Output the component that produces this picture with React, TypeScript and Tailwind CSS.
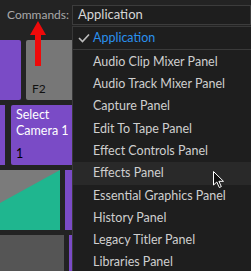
import React from "react";

const items = [
  "Audio Clip Mixer Panel",
  "Audio Track Mixer Panel",
  "Capture Panel",
  "Edit To Tape Panel",
  "Effect Controls Panel",
  "Effects Panel",
  "Essential Graphics Panel",
  "History Panel",
  "Legacy Titler Panel",
  "Libraries Panel",
];

export default function App() {
  return (
    <div
      className="relative w-[251px] h-[271px] overflow-hidden bg-[#232323]"
      style={{ fontFamily: 'Lato, "Noto Sans", sans-serif' }}
    >
      {/* top bar */}
      <div className="flex items-center h-[30px] pl-[7px]">
        <span className="text-[12px] text-[#a9a9a9] w-[65px]">Commands:</span>
        <div className="flex items-center h-[20px] flex-1 border border-[#3c3c3c] bg-[#1e1e1e] pl-[5px] text-[13px] text-[#d6d6d6]">
          Application
        </div>
      </div>

      {/* keys */}
      <div className="flex flex-col gap-[5px] mt-[10px] w-[100px]">
        <div className="flex gap-[5px] h-[60px]">
          <div className="w-[21px] bg-[#7a4bc6] rounded-r-[2px]" />
          <div className="flex-1 bg-[#777777] rounded-[2px] relative">
            <span className="absolute left-[6px] bottom-[2px] text-[12px] text-[#111]">F2</span>
          </div>
        </div>
        <div className="flex gap-[6px] h-[60px]">
          <div className="w-[5px] bg-[#7a4bc6]" />
          <div className="flex-1 bg-[#7a4bc6] rounded-[2px] flex flex-col pl-[5px] pt-[2px] text-[12.5px] leading-[16px] text-white">
            <span>Select</span>
            <span>Camera 1</span>
            <span className="mt-auto mb-[3px] text-[#000]">1</span>
          </div>
        </div>
        <div className="flex gap-[5px] h-[60px]">
          <div className="w-[60px] relative">
            <svg width="60" height="60" className="block">
              <rect width="60" height="60" fill="#1fb68f" />
              <polygon points="0,0 60,0 0,33" fill="#7b7b7b" />
            </svg>
          </div>
          <div className="flex-1 bg-[#7a4bc6]" />
        </div>
        <div className="flex gap-[5px] h-[60px]">
          <div className="w-[64px] bg-[#555555]" />
          <div className="flex-1 bg-[#7a4bc6]" />
        </div>
      </div>

      {/* red arrow */}
      <svg className="absolute left-[29px] top-[21px]" width="18" height="46">
        <polygon points="9,0 17,14 12,14 12,45 6,45 6,14 1,14" fill="#ee0a0a" />
      </svg>

      {/* dropdown menu */}
      <div className="absolute left-[72px] top-[26px] right-0 bottom-0 bg-[#1e1e1e] border-t border-l border-[#383838] text-[12.5px]">
        <div className="flex items-center h-[22px] text-[#2a90ee] pl-[20px] relative">
          <svg className="absolute left-[5px] top-[6px]" width="12" height="10" viewBox="0 0 12 10">
            <path d="M1 5 L4.5 8.5 L11 1.5" stroke="#bdbdbd" strokeWidth="1.6" fill="none" />
          </svg>
          Application
        </div>
        <div className="h-px bg-[#3a3a3a] mb-[1px]" />
        {items.map((t) => (
          <div
            key={t}
            className={`flex items-center h-[22.3px] pl-[20px] text-[#cfcfcf] ${
              t === "Effects Panel" ? "bg-[#292929]" : ""
            }`}
          >
            {t}
          </div>
        ))}
      </div>

      {/* cursor */}
      <svg className="absolute left-[213px] top-[171px]" width="12" height="18" viewBox="0 0 12 18">
        <path d="M0.5 0.5 L0.5 14 L3.8 11 L6.3 16.5 L8.3 15.6 L5.9 10.3 L10.5 10.3 Z" fill="#111" stroke="#fff" strokeWidth="1" />
      </svg>
    </div>
  );
}
